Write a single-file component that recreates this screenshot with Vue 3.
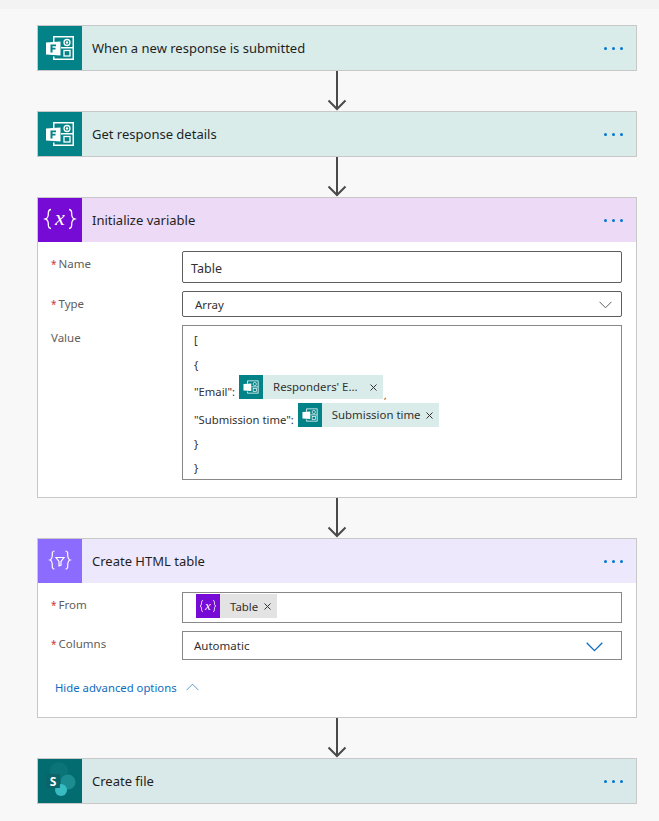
<script setup>
const sheet = 'M7 1h21v24H7v-3.500h1.500V23.500h18V13.500H15V12h11.500V2.500h-18V7H7z'
const fTile = 'M0 7.500 14.500 6.500V20.500L0 19.500z'
const fLetter = 'M4.500 9.500h5.500v1.700H6.500v1.600h3v1.600h-3v3.100h-2z'
const arrow = 'M11 0v38M2.500 29.500 11 38l8.500-8.500'
const cross = 'M.5.500l6 6M6.500.500l-6 6'
</script>

<template>
  <div class="page">
    <div class="strip"></div>
    <div class="flow">
      <section class="card">
        <header class="head teal">
          <div class="ico tealbg">
            <svg width="28" height="26" viewBox="0 0 28 26"><path class="fl" :d="sheet" /><circle cx="21" cy="7.500" r="3" class="ol" /><circle cx="21" cy="7.500" r="1.200" fill="#fff" /><rect x="18" y="15.500" width="6" height="5.500" class="ol" /><path class="fl" :d="fTile" /><path :d="fLetter" fill="#038387" /></svg>
          </div>
          <span class="title">When a new response is submitted</span>
          <span class="more"><i></i><i></i><i></i></span>
        </header>
      </section>
      <div class="link"><svg width="22" height="40" viewBox="0 0 22 40"><path :d="arrow" class="arrow" /></svg></div>
      <section class="card">
        <header class="head teal">
          <div class="ico tealbg">
            <svg width="28" height="26" viewBox="0 0 28 26"><path class="fl" :d="sheet" /><circle cx="21" cy="7.500" r="3" class="ol" /><circle cx="21" cy="7.500" r="1.200" fill="#fff" /><rect x="18" y="15.500" width="6" height="5.500" class="ol" /><path class="fl" :d="fTile" /><path :d="fLetter" fill="#038387" /></svg>
          </div>
          <span class="title">Get response details</span>
          <span class="more"><i></i><i></i><i></i></span>
        </header>
      </section>
      <div class="link"><svg width="22" height="40" viewBox="0 0 22 40"><path :d="arrow" class="arrow" /></svg></div>
      <section class="card">
        <header class="head purple">
          <div class="ico purplebg">
            <svg width="44" height="44" viewBox="0 0 44 44" fill="none" stroke="#fff" stroke-width="1.300"><path d="M13 11.500c-3.500 0-2.500 3.500-2.800 6-.2 1.800-.9 3-2.700 3.500 1.800.5 2.500 1.700 2.700 3.500.3 2.500-.7 6 2.800 6M31 11.500c3.500 0 2.500 3.500 2.800 6 .2 1.800.9 3 2.700 3.500-1.800.5-2.500 1.700-2.700 3.500-.3 2.500.7 6-2.800 6" /><text x="22" y="27" class="vx">x</text></svg>
          </div>
          <span class="title">Initialize variable</span>
          <span class="more"><i></i><i></i><i></i></span>
        </header>
        <div class="body b3">
          <div class="row r-name">
            <label class="lab"><s>*</s>Name</label>
            <div class="box dark name">Table</div>
          </div>
          <div class="row r-type">
            <label class="lab"><s>*</s>Type</label>
            <div class="box dark type">Array
              <svg class="chev" width="13" height="8" viewBox="0 0 13 8"><path d="M.5.800 6.500 6.800 12.500.800" fill="none" stroke="#605e5c" /></svg>
            </div>
          </div>
          <div class="row">
            <label class="lab">Value</label>
            <div class="box mid value">
              <div class="ln l1">[</div>
              <div class="ln l2">{</div>
              <div class="ln tk">"Email":
                <span class="chip">
                  <span class="chipico">
                    <svg width="16" height="14" viewBox="0 0 28 26"><path class="fl" :d="sheet" /><circle cx="21" cy="7.500" r="3" class="ol" /><rect x="18" y="15.500" width="6" height="5.500" class="ol" /><path class="fl" :d="fTile" /></svg>
                  </span>
                  <span class="chiptext resp">Responders' E...</span><svg class="x" width="7" height="7" viewBox="0 0 7 7"><path :d="cross" /></svg>
                </span><span class="comma">,</span>
              </div>
              <div class="ln tk">"Submission time":
                <span class="chip">
                  <span class="chipico">
                    <svg width="16" height="14" viewBox="0 0 28 26"><path class="fl" :d="sheet" /><circle cx="21" cy="7.500" r="3" class="ol" /><rect x="18" y="15.500" width="6" height="5.500" class="ol" /><path class="fl" :d="fTile" /></svg>
                  </span>
                  <span class="chiptext sub">Submission time</span><svg class="x" width="7" height="7" viewBox="0 0 7 7"><path :d="cross" /></svg>
                </span>
              </div>
              <div class="ln l5">}</div>
              <div class="ln">}</div>
            </div>
          </div>
        </div>
      </section>
      <div class="link"><svg width="22" height="40" viewBox="0 0 22 40"><path :d="arrow" class="arrow" /></svg></div>
      <section class="card">
        <header class="head violet">
          <div class="ico violetbg">
            <svg width="44" height="44" viewBox="0 0 44 44" fill="none" stroke="#fff" stroke-width="1.200"><path d="M16.500 12c-3 0-2 3.500-2.300 5.500-.2 1.800-.7 3-2.200 3.500 1.500.5 2 1.700 2.200 3.500.3 2 -.7 5.500 2.300 5.500M27.500 12c3 0 2 3.500 2.300 5.500.2 1.800.7 3 2.200 3.500-1.500.5-2 1.700-2.200 3.500-.3 2 .7 5.500-2.300 5.500" /><path d="M18 18.500h8L23 22.500v3.500l-2 .8v-4.300z" /></svg>
          </div>
          <span class="title">Create HTML table</span>
          <span class="more"><i></i><i></i><i></i></span>
        </header>
        <div class="body b4">
          <div class="row r-from">
            <label class="lab"><s>*</s>From</label>
            <div class="box mid from">
              <span class="chip grey">
                <span class="chipico pu">
                  <svg width="24" height="24" viewBox="0 0 24 24" fill="none" stroke="#fff" stroke-width=".8"><path d="M7 6.500c-2 0-1.300 2-1.500 3.500-.1 1-.5 1.700-1.500 2 1 .3 1.400 1 1.500 2 .2 1.500-.5 3.500 1.500 3.500M17 6.500c2 0 1.300 2 1.500 3.500.1 1 .5 1.700 1.500 2-1 .3-1.400 1-1.500 2-.2 1.500.5 3.500-1.500 3.500" /><text x="12" y="15.500" class="vx sm">x</text></svg>
                </span>
                <span class="chiptext tab">Table</span><svg class="x t" width="7" height="7" viewBox="0 0 7 7"><path :d="cross" /></svg>
              </span>
            </div>
          </div>
          <div class="row r-col">
            <label class="lab"><s>*</s>Columns</label>
            <div class="box mid cols">Automatic
              <svg class="chev blue" width="17" height="10" viewBox="0 0 17 10"><path d="M.7.800 8.500 8.600 16.300.800" fill="none" stroke="#0f6cbd" stroke-width="1.300" /></svg>
            </div>
          </div>
          <div class="adv">Hide advanced options
            <svg width="13" height="8" viewBox="0 0 13 8"><path d="M.5 7.200 6.500 1.200l6 6" fill="none" stroke="#5a9fd8" /></svg>
          </div>
        </div>
      </section>
      <div class="link"><svg width="22" height="40" viewBox="0 0 22 40"><path :d="arrow" class="arrow" /></svg></div>
      <section class="card">
        <header class="head shp">
          <div class="ico shpbg">
            <svg width="44" height="44" viewBox="0 0 44 44"><circle cx="21" cy="12" r="9" fill="#0b7478" /><circle cx="30" cy="23" r="7.500" fill="#1b8d91" /><circle cx="23" cy="31" r="6" fill="#38bcc2" /><rect x="8" y="15" width="14" height="14" rx="1" fill="#0a6468" /><text x="15" y="26.500" class="s">S</text></svg>
          </div>
          <span class="title">Create file</span>
          <span class="more"><i></i><i></i><i></i></span>
        </header>
      </section>
    </div>
  </div>
</template>

<style>
body { margin: 0; background: #f8f8f8; }
</style>

<style scoped>
.page { width: 659px; height: 821px; overflow: hidden; background: #f8f8f8; font-family: "Noto Sans", "Open Sans", sans-serif; color: #252423; }
.strip { height: 9px; background: #f3f3f3; }
.flow { width: 600px; margin: 16px 0 0 37px; }
.card { box-sizing: border-box; border: 1px solid #c8c8c8; background: #fff; }
.head { display: flex; align-items: center; height: 44px; }
.ico { width: 44px; height: 44px; flex: none; display: flex; align-items: center; justify-content: center; }
.teal { background: #d9ecea; }
.tealbg { background: #038387; }
.purple { background: #ecdaf6; }
.purplebg { background: #770bd6; }
.violet { background: #eee8fd; }
.violetbg { background: #8c6cff; }
.shp { background: #d9e8e9; }
.shpbg { background: #036c70; }
.title { flex: 1; margin-left: 10px; font-size: 13px; color: #1f1f1f; }
.more { display: flex; gap: 5px; margin-right: 13px; }
.more i { width: 3px; height: 3px; background: #0078d4; border-radius: 50%; }
.link { height: 40px; display: flex; justify-content: center; }
.arrow { fill: none; stroke: #4a4a4a; stroke-width: 2; }
.fl { fill: #fff; fill-rule: evenodd; }
.ol { fill: none; stroke: #fff; stroke-width: 1.300; }
.vx { fill: #fff; stroke: none; font: italic 400 22px "Liberation Serif", serif; text-anchor: middle; }
.vx.sm { font-size: 13px; }
.body { box-sizing: border-box; }
.b3 { padding-top: 9px; height: 255px; }
.b4 { padding-top: 9px; height: 134px; }
.row { display: flex; }
.r-name { height: 40px; }
.r-type { height: 34px; }
.r-from { height: 39px; }
.r-col { height: 29px; }
.lab { width: 144px; flex: none; padding: 5px 0 0 13px; box-sizing: border-box; font-size: 11.500px; line-height: 16px; color: #605e5c; }
.lab s { color: #d13438; text-decoration: none; margin-right: 2px; font-size: 10px; }
.box { box-sizing: border-box; width: 440px; flex: none; position: relative; background: #fff; font-size: 12px; color: #323130; }
.dark { border: 1px solid #605e5c; border-radius: 2px; }
.mid { border: 1px solid #8a8886; }
.name { height: 32px; line-height: 33px; padding-left: 8px; font-size: 12.500px; }
.type { height: 26px; line-height: 26px; padding-left: 12px; font-size: 11.500px; }
.chev { position: absolute; right: 9px; top: 9px; }
.chev.blue { top: 10px; right: 18px; }
.value { height: 155px; padding: 2px 11px 0; font-size: 11.250px; overflow: hidden; }
.ln { height: 24px; line-height: 24px; white-space: nowrap; }
.l2 { margin-top: 1px; margin-bottom: 1px; }
.l5 { margin-top: -2px; }
.tk { height: 28px; line-height: 28px; display: flex; align-items: center; gap: 4px; }
.comma { align-self: flex-end; margin-left: -3px; font-size: 9px; line-height: 20px; }
.chip { display: inline-flex; align-items: center; height: 24px; background: #d9ecea; transform: translateY(-5px); }
.chip.grey { background: #e3e3e3; transform: none; }
.chipico { width: 24px; height: 24px; flex: none; background: #038387; display: flex; align-items: center; justify-content: center; }
.chipico.pu { background: #770bd6; }
.chiptext { font-size: 11.400px; color: #323130; white-space: nowrap; }
.resp { margin-left: 10px; width: 91px; }
.sub { margin-left: 10px; width: 88px; }
.tab { margin-left: 10px; }
.x { flex: none; margin: 0 6px 0 6px; fill: none; stroke: #323130; stroke-width: 1; }
.x.t { margin: 0 6px 0 6px; }
.from { height: 31px; padding: 1px 13px; }
.cols { height: 29px; line-height: 27px; padding-left: 11px; font-size: 11.500px; }
.adv { margin-top: 18px; padding-left: 17px; display: flex; align-items: center; gap: 9px; font-size: 11.300px; color: #0f6cbd; height: 18px; }
.s { fill: #fff; font: 700 12px "Open Sans", sans-serif; text-anchor: middle; }
</style>
